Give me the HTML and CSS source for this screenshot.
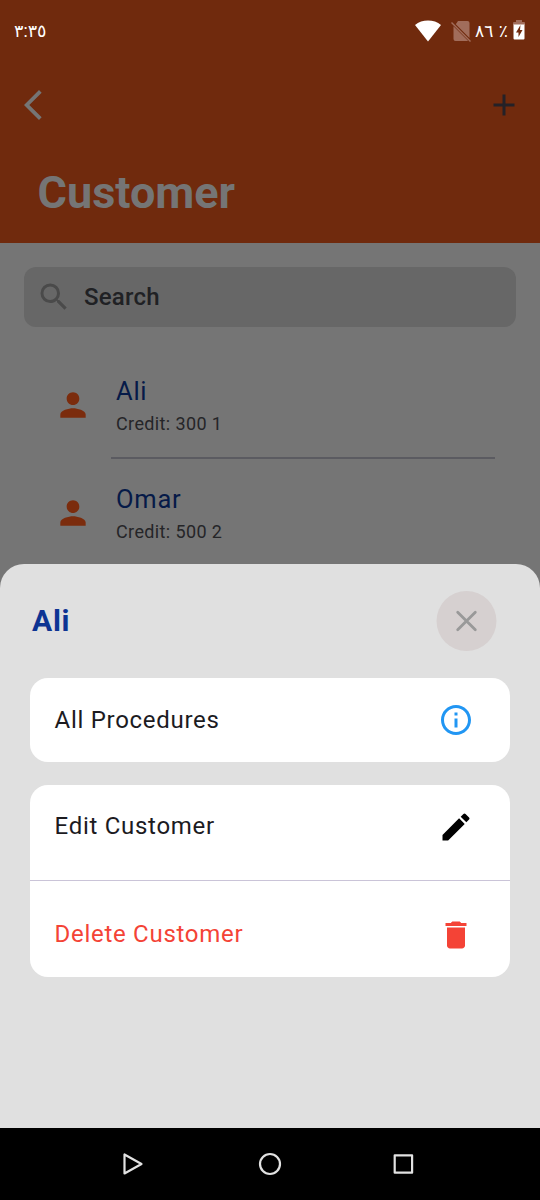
FILE: index.html
```html
<!DOCTYPE html>
<html lang="en">
<head>
<meta charset="utf-8">
<title>Customer</title>
<link rel="stylesheet" href="styles.css">
</head>
<body>
<div class="screen">
  <header class="header">
    <div class="status">
      <span class="clock" dir="ltr">٣:٣٥</span>
      <div class="status-icons">
        <svg class="wifi" width="28" height="24" viewBox="0 0 28 24"><path d="M1 6C8 .1 20 .1 27 6L14 22.500z" fill="#fff"/></svg>
        <svg class="sim" width="20" height="24" viewBox="0 0 20 24"><path d="M7 2h9.500a2 2 0 0 1 2 2v15L4.800 5.200zM2.500 7.200L17 21.700l-.5.3H4.500a2 2 0 0 1-2-2z" fill="#a16d5b"/><path d="M.5 3.500L19.500 22.500" stroke="#a16d5b" stroke-width="1.500"/></svg>
        <span class="battery-text" dir="ltr"><span>٨٦</span><span class="percent">٪</span></span>
        <svg class="battery" width="12" height="20" viewBox="0 0 12 20"><path d="M3 0h6v2h2q1 0 1 1v2H0V3q0-1 1-1h2z" fill="#a16d5b"/><path d="M.5 4.500h11v14q0 1-1 1h-9q-1 0-1-1z" fill="#fff"/><path d="M7.500 5L3 12.500h2.500V17L9.500 10H7z" fill="#702a0d"/></svg>
      </div>
    </div>
    <div class="toolbar">
      <svg width="36" height="36" viewBox="0 0 24 24"><path d="M17.770 3.770 16 2 6 12l10 10 1.770-1.770L9.540 12z" fill="#757575"/></svg>
      <svg width="36" height="36" viewBox="0 0 24 24"><path d="M19 13h-6v6h-2v-6H5v-2h6V5h2v6h6z" fill="#242127"/></svg>
    </div>
    <h1 class="title">Customer</h1>
  </header>
  <main class="content">
    <div class="search">
      <svg width="36" height="36" viewBox="0 0 24 24"><path d="M15.500 14h-.790l-.280-.270A6.471 6.471 0 0 0 16 9.500 6.500 6.500 0 1 0 9.500 16c1.610 0 3.090-.590 4.230-1.570l.270.280v.790l5 4.990L20.490 19zm-6 0C7.010 14 5 11.990 5 9.500S7.010 5 9.500 5 14 7.010 14 9.500 11.990 14 9.500 14z" fill="#4a4a4a"/></svg>
      <span class="search-label">Search</span>
    </div>
    <div class="customer">
      <svg class="person" width="38" height="38" viewBox="0 0 24 24"><path d="M12 12c2.210 0 4-1.790 4-4s-1.790-4-4-4-4 1.790-4 4 1.790 4 4 4zm0 2c-2.670 0-8 1.340-8 4v2h16v-2c0-2.660-5.330-4-8-4z" fill="#7b2c0d"/></svg>
      <div class="info"><div class="name">Ali</div><div class="credit">Credit: 300 1</div></div>
    </div>
    <div class="customer">
      <svg class="person" width="38" height="38" viewBox="0 0 24 24"><path d="M12 12c2.210 0 4-1.790 4-4s-1.790-4-4-4-4 1.790-4 4 1.790 4 4 4zm0 2c-2.670 0-8 1.340-8 4v2h16v-2c0-2.660-5.330-4-8-4z" fill="#7b2c0d"/></svg>
      <div class="info"><div class="name">Omar</div><div class="credit">Credit: 500 2</div></div>
    </div>
  </main>
  <section class="sheet">
    <div class="sheet-head">
      <h2 class="sheet-title">Ali</h2>
      <svg class="close" width="61" height="60" viewBox="0 0 61 60"><circle cx="30.500" cy="30" r="30" fill="#d6d0d0"/><path d="M21.700 21.200l17.600 17.600M39.300 21.200L21.700 38.800" stroke="#999" stroke-width="2.800" stroke-linecap="round"/></svg>
    </div>
    <div class="card">
      <div class="row row-single"><span>All Procedures</span>
        <svg width="36" height="36" viewBox="0 0 24 24"><path d="M11 7h2v2h-2zm0 4h2v6h-2zm1-9C6.480 2 2 6.480 2 12s4.480 10 10 10 10-4.480 10-10S17.520 2 12 2zm0 18c-4.410 0-8-3.590-8-8s3.590-8 8-8 8 3.590 8 8-3.590 8-8 8z" fill="#2196f3"/></svg>
      </div>
    </div>
    <div class="card card-group">
      <div class="row row-edit"><span>Edit Customer</span>
        <svg width="36" height="36" viewBox="0 0 24 24"><path d="M3 17.250V21h3.750L17.810 9.940l-3.750-3.750zM20.710 7.040a1 1 0 0 0 0-1.410l-2.340-2.340a1 1 0 0 0-1.410 0l-1.830 1.830 3.750 3.750z" fill="#000"/></svg>
      </div>
      <div class="row row-delete"><span>Delete Customer</span>
        <svg width="36" height="36" viewBox="0 0 24 24"><path d="M6 19c0 1.100.9 2 2 2h8c1.100 0 2-.9 2-2V7H6zM19 4h-3.500l-1-1h-5l-1 1H5v2h14z" fill="#f44336"/></svg>
      </div>
    </div>
  </section>
  <nav class="navbar">
    <svg width="24" height="24" viewBox="0 0 24 24"><path d="M3.500 2.500v19L20.500 12z" fill="none" stroke="#e2e2e2" stroke-width="2.200" stroke-linejoin="round"/></svg>
    <svg width="24" height="24" viewBox="0 0 24 24"><circle cx="12" cy="12" r="10" fill="none" stroke="#e2e2e2" stroke-width="2.200"/></svg>
    <svg width="24" height="24" viewBox="0 0 24 24"><rect x="2.700" y="3.300" width="17.400" height="17.400" fill="none" stroke="#e2e2e2" stroke-width="2.200" stroke-linejoin="round"/></svg>
  </nav>
</div>
</body>
</html>
```
FILE: styles.css
```css
* { box-sizing: border-box; }
body { margin: 0; font-family: Roboto, "Noto Sans", "DejaVu Sans", sans-serif; background: #757575; }
svg { display: block; flex: none; }
h1, h2 { margin: 0; }
.screen { width: 540px; height: 1200px; display: flex; flex-direction: column; background: #757575; }

.header { height: 243px; background: #702a0d; flex: none; }
.status { height: 60px; padding: 0 15px 0 14px; display: flex; align-items: center; justify-content: space-between; color: #fff; font-size: 18px; }
.clock { padding-top: 2px; font-size: 17.500px; }
.status-icons { display: flex; align-items: center; }
.wifi, .sim { margin-top: 1px; }
.sim { margin-left: 9px; }
.battery-text { width: 33px; margin: 0 5px 0 4px; padding-top: 2px; display: flex; align-items: center; justify-content: space-between; font-size: 17px; }
.percent { font-size: 17px; }
.toolbar { padding: 27px 18px 0 15px; display: flex; justify-content: space-between; }
.title { padding: 43px 0 0 37.500px; font-size: 45px; line-height: 53px; font-weight: 700; color: #757575; }

.content { height: 321px; padding-top: 24px; flex: none; }
.search { margin: 0 24px 36px; height: 60px; padding-left: 12px; border-radius: 12px; background: #676767; display: flex; align-items: center; }
.search-label { margin-left: 12px; font-size: 24px; font-weight: 500; color: #202124; letter-spacing: .22px; }
.customer { height: 108px; padding-left: 54px; display: flex; }
.person { margin-top: 23px; }
.info { width: 384px; margin-left: 19px; padding: 12px 0 0 5px; height: 96px; border-bottom: 2px solid #5b5b61; }
.name { font-size: 25.500px; line-height: 32px; color: #061a48; letter-spacing: .75px; }
.credit { margin-top: 6px; font-size: 18px; line-height: 22px; color: #252528; letter-spacing: .375px; }

.sheet { height: 564px; padding: 27px 30px 0; border-radius: 24px 24px 0 0; background: #e0e0e0; flex: none; }
.sheet-head { height: 60px; padding: 0 13px 0 2px; display: flex; justify-content: space-between; align-items: center; }
.sheet-title { padding-bottom: 2px; font-size: 30px; font-weight: 700; color: #0d3493; letter-spacing: .75px; }
.card { margin-top: 27px; border-radius: 18px; background: #fff; color: #1c1b1f; overflow: hidden; }
.card-group { margin-top: 22.500px; }
.row { padding: 0 36px 0 24.500px; display: flex; align-items: center; justify-content: space-between; font-size: 24px; letter-spacing: .72px; }
.row-single { height: 84px; }
.row-edit { height: 96px; padding-bottom: 11px; border-bottom: 1px solid #cac4d8; }
.row-edit span { padding-bottom: 1.500px; }
.row-delete { height: 96px; padding-top: 12px; color: #f44336; }
.row-delete span { padding-bottom: 2px; }

.navbar { height: 72px; padding: 0 124px 0 121px; background: #000; display: grid; grid-template-columns: 137px 134px 24px; align-items: center; flex: none; }
.navbar svg:nth-child(-n+2) { margin-left: 0; }
.navbar { padding-left: 121px; }
```
